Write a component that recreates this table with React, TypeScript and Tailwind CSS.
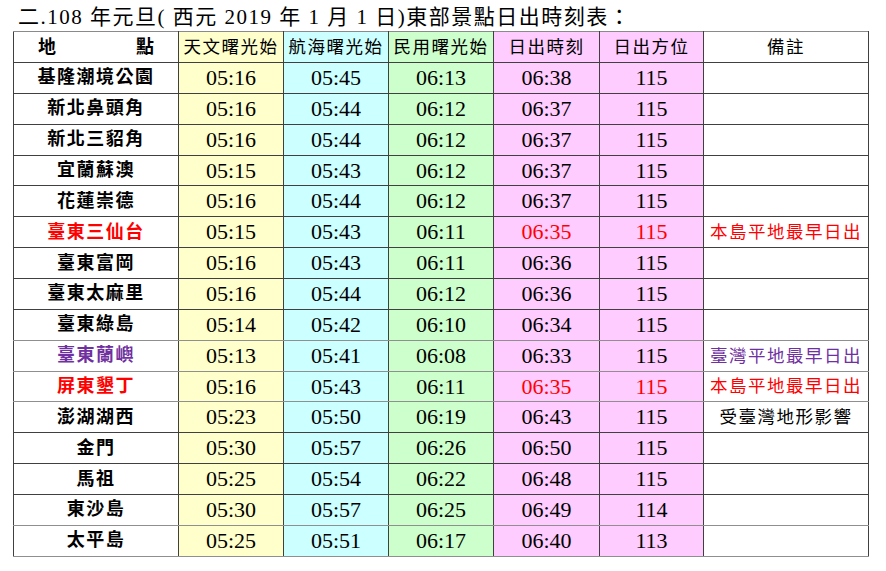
import React from "react";

type Row = {
  name: string;
  t: [string, string, string, string, string];
  note?: string;
  color?: "red" | "purple";
  light?: boolean; // lighter bottom border
};

const rows: Row[] = [
  { name: "基隆潮境公園", t: ["05:16", "05:45", "06:13", "06:38", "115"] },
  { name: "新北鼻頭角", t: ["05:16", "05:44", "06:12", "06:37", "115"] },
  { name: "新北三貂角", t: ["05:16", "05:44", "06:12", "06:37", "115"] },
  { name: "宜蘭蘇澳", t: ["05:15", "05:43", "06:12", "06:37", "115"] },
  { name: "花蓮崇德", t: ["05:16", "05:44", "06:12", "06:37", "115"] },
  { name: "臺東三仙台", t: ["05:15", "05:43", "06:11", "06:35", "115"], note: "本島平地最早日出", color: "red" },
  { name: "臺東富岡", t: ["05:16", "05:43", "06:11", "06:36", "115"] },
  { name: "臺東太麻里", t: ["05:16", "05:44", "06:12", "06:36", "115"] },
  { name: "臺東綠島", t: ["05:14", "05:42", "06:10", "06:34", "115"], light: true },
  { name: "臺東蘭嶼", t: ["05:13", "05:41", "06:08", "06:33", "115"], note: "臺灣平地最早日出", color: "purple", light: true },
  { name: "屏東墾丁", t: ["05:16", "05:43", "06:11", "06:35", "115"], note: "本島平地最早日出", color: "red", light: true },
  { name: "澎湖湖西", t: ["05:23", "05:50", "06:19", "06:43", "115"], note: "受臺灣地形影響" },
  { name: "金門", t: ["05:30", "05:57", "06:26", "06:50", "115"] },
  { name: "馬祖", t: ["05:25", "05:54", "06:22", "06:48", "115"] },
  { name: "東沙島", t: ["05:30", "05:57", "06:25", "06:49", "114"], light: true },
  { name: "太平島", t: ["05:25", "05:51", "06:17", "06:40", "113"], light: true },
];

const bgs = ["bg-[#ffffcc]", "bg-[#ccffff]", "bg-[#ccffcc]", "bg-[#ffccff]", "bg-[#ffccff]"];
const widths = ["w-[165px]", "w-[105px]", "w-[105px]", "w-[105px]", "w-[106px]", "w-[104px]", "w-[165px]"];

const font = { fontFamily: '"Liberation Serif", "Noto Sans CJK TC", serif' };

export default function App() {
  return (
    <div className="w-[886px] h-[571px] bg-white text-black" style={font}>
      <div className="pl-[18px] pt-[4px] h-[31px] text-[21px] leading-[26px] tracking-[1.5px] whitespace-nowrap">
        二.108 年元旦( 西元 2019 年 1 月 1 日)東部景點日出時刻表：
      </div>
      <table className="ml-[13px] table-fixed border-collapse w-[855px]">
        <colgroup>
          {widths.map((w, i) => (
            <col key={i} className={w} />
          ))}
        </colgroup>
        <thead>
          <tr className="h-[31px]">
            <th className="border border-[#404040] border-t-[#8a8a8a] font-normal text-[18px] p-0">
              <div className="flex justify-between px-[24px] font-bold">
                <span>地</span>
                <span>點</span>
              </div>
            </th>
            {["天文曙光始", "航海曙光始", "民用曙光始", "日出時刻", "日出方位", "備註"].map((h, i) => (
              <th
                key={h}
                className={`border border-[#404040] border-t-[#8a8a8a] font-normal text-[17.5px] tracking-[1.5px] p-0 ${
                  i < 5 ? bgs[i] : "bg-white"
                }`}
              >
                {h}
              </th>
            ))}
          </tr>
        </thead>
        <tbody>
          {rows.map((r, ri) => {
            const c = r.color === "red" ? "text-[#ff0000]" : r.color === "purple" ? "text-[#7030a0]" : "text-black";
            const bb = r.light ? "border-b-[#8f8f8f]" : "";
            return (
              <tr key={ri} className="h-[30.86px]">
                <td className={`border border-[#404040] ${bb} text-center text-[18px] tracking-[1.5px] font-bold p-0 ${c}`}>
                  {r.name}
                </td>
                {r.t.map((v, i) => (
                  <td
                    key={i}
                    className={`border border-[#404040] ${bb} text-center text-[22px] leading-[24px] p-0 ${bgs[i]} ${
                      r.color === "red" && i >= 3 ? "text-[#ff0000]" : "text-black"
                    }`}
                  >
                    {v}
                  </td>
                ))}
                <td className={`border border-[#404040] ${bb} text-center text-[17.5px] tracking-[1.5px] p-0 whitespace-nowrap ${c}`}>
                  {r.note ?? ""}
                </td>
              </tr>
            );
          })}
        </tbody>
      </table>
    </div>
  );
}
